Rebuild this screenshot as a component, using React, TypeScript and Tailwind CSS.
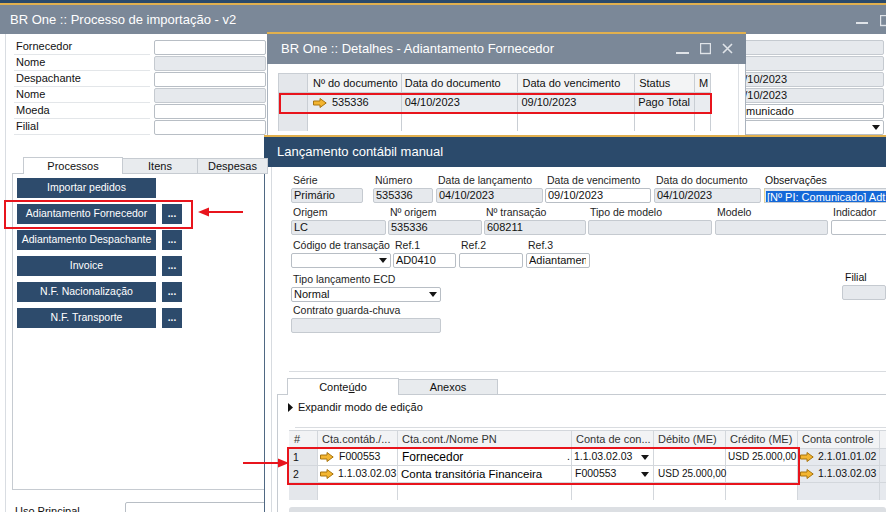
import React from "react";

function Arrow() {
  return (
    <svg width="14" height="10" viewBox="0 0 14 10" className="shrink-0">
      <path d="M0.5 3 H7 V0.5 L13.2 5 L7 9.5 V7 H0.5 Z" fill="#f3b531" stroke="#a8740f" strokeWidth="1" />
    </svg>
  );
}

function Caret() {
  return (
    <svg width="8" height="5" viewBox="0 0 8 5" className="shrink-0">
      <path d="M0 0 H8 L4 5 Z" fill="#151515" />
    </svg>
  );
}

type BoxProps = {
  w: string;
  gray?: boolean;
  caret?: boolean;
  children?: React.ReactNode;
};

function Box({ w, gray, caret, children }: BoxProps) {
  return (
    <div
      className={`${w} h-[15px] border rounded-[2px] flex items-center pl-[2px] pr-[3px] overflow-hidden whitespace-nowrap ${
        gray ? "bg-[#e6e9ed] border-[#c5cad0]" : "bg-white border-[#b8bec5]"
      }`}
    >
      <span className="flex-1 overflow-hidden leading-[13px]">{children}</span>
      {caret && <Caret />}
    </div>
  );
}

type FieldProps = {
  label: string;
  w: string;
  ml?: string;
  gray?: boolean;
  caret?: boolean;
  value?: React.ReactNode;
};

function Field({ label, w, ml = "", gray, caret, value }: FieldProps) {
  return (
    <div className={`${w} ${ml} shrink-0 flex flex-col`}>
      <div className="h-[14px] leading-[14px] pl-[2px] whitespace-nowrap text-[10.5px] text-[#1e1e1e]">{label}</div>
      <div className="mt-[1px]">
        <Box w="w-full" gray={gray} caret={caret}>
          {value}
        </Box>
      </div>
    </div>
  );
}

function WinButtons() {
  return (
    <div className="flex items-center gap-[11px]">
      <svg width="13" height="12" viewBox="0 0 13 12">
        <rect x="0" y="9" width="13" height="2" fill="#dfe3e8" />
      </svg>
      <svg width="11" height="12" viewBox="0 0 11 12">
        <rect x="0.5" y="0.5" width="10" height="10" fill="none" stroke="#dfe3e8" strokeWidth="1.4" />
      </svg>
      <svg width="11" height="12" viewBox="0 0 11 12">
        <path d="M1 1 L10 10 M10 1 L1 10" stroke="#dfe3e8" strokeWidth="1.6" />
      </svg>
    </div>
  );
}

const mainRows = [
  { label: "Fornecedor", gray: false, rGray: true, rText: "", caret: false },
  { label: "Nome", gray: true, rGray: true, rText: "", caret: false },
  { label: "Despachante", gray: false, rGray: true, rText: "04/10/2023", caret: false },
  { label: "Nome", gray: true, rGray: true, rText: "09/10/2023", caret: false },
  { label: "Moeda", gray: false, rGray: false, rText: "Comunicado", caret: false },
  { label: "Filial", gray: false, rGray: false, rText: "", caret: true },
];

const buttons = [
  { text: "Importar pedidos", more: false },
  { text: "Adiantamento Fornecedor", more: true },
  { text: "Adiantamento Despachante", more: true },
  { text: "Invoice", more: true },
  { text: "N.F. Nacionalização", more: true },
  { text: "N.F. Transporte", more: true },
];

const lcCols = ["w-[29px]", "w-[80px]", "w-[174px]", "w-[82px]", "w-[72px]", "w-[72px]", "w-[82px]", "w-[20px]"];
const lcHead = ["#", "Cta.contáb./...", "Cta.cont./Nome PN", "Conta de con...", "Débito (ME)", "Crédito (ME)", "Conta controle", ""];

export default function App() {
  return (
    <div className="relative w-[886px] h-[512px] overflow-hidden bg-white text-[11px] text-[#111] font-['Liberation_Sans',Arial,sans-serif]">
      {/* Main window */}
      <div className="h-[3px] bg-[#2b4a6b]" />
      <div className="h-[2px] bg-[#e1b04e]" />
      <div className="h-[29px] bg-[#7b8898] flex items-center justify-between pl-[10px]">
        <span className="text-[13px] text-white">BR One :: Processo de importação - v2</span>
        <div className="flex items-center gap-[12px] -mr-[6px] mt-[2px]">
          <svg width="12" height="12" viewBox="0 0 12 12">
            <rect x="0" y="7" width="12" height="2" fill="#dfe3e8" />
          </svg>
          <svg width="12" height="12" viewBox="0 0 12 12">
            <rect x="0.5" y="0.5" width="11" height="10" fill="none" stroke="#dfe3e8" strokeWidth="1.4" />
          </svg>
        </div>
      </div>

      <div className="pl-[5px] h-[478px]">
        <div className="h-full border-l border-[#d9dde2] pt-[5px]">
          {mainRows.map((r, i) => (
            <div key={i} className="flex items-center h-[16px]">
              <div className="ml-[8px] w-[136px] h-full border-b border-[#e3e6e9] pl-[2px] leading-[15px]">{r.label}</div>
              <div className="ml-[4px]">
                <Box w="w-[112px]" gray={r.gray} />
              </div>
              <div className="ml-auto mr-[2px]">
                <Box w="w-[155px]" gray={r.rGray} caret={r.caret}>
                  {r.rText}
                </Box>
              </div>
            </div>
          ))}

          {/* tabs */}
          <div className="mt-[22px] ml-[17px] flex relative z-10 -mb-px">
            <div className="w-[100px] h-[17px] bg-white border border-b-0 border-[#c6cbd1] flex items-center justify-center">Processos</div>
            <div className="w-[75px] h-[16px] mt-[1px] bg-[#e8ebee] border border-l-0 border-[#c6cbd1] flex items-center justify-center">Itens</div>
            <div className="w-[70px] h-[16px] mt-[1px] bg-[#e8ebee] border border-l-0 border-[#c6cbd1] flex items-center justify-center">Despesas</div>
          </div>
          <div className="ml-[6px] w-[262px] h-[317px] border border-[#c6cbd1] pt-[4px] pl-[4px] flex flex-col gap-[6px]">
            {buttons.map((b) => (
              <div key={b.text} className="flex gap-[6px]">
                <div className="w-[139px] h-[20px] bg-[#2d4b6c] text-white text-[10.5px] flex items-center justify-center">{b.text}</div>
                {b.more && (
                  <div className="w-[20px] h-[20px] bg-[#2d4b6c] text-white flex items-center justify-center text-[10px] font-bold pb-[2px]">...</div>
                )}
              </div>
            ))}
          </div>
          <div className="mt-[12px] flex items-start">
            <div className="ml-[9px] w-[110px] pt-[1px]">Uso Principal</div>
            <Box w="w-[142px]" />
          </div>
        </div>
      </div>

      {/* Detalhes window */}
      <div className="absolute left-[267px] top-[32px] w-[479px] h-[104px] flex flex-col">
        <div className="h-[2px] shrink-0 bg-[#e1b04e]" />
        <div className="h-[30px] shrink-0 bg-[#7b8898] flex items-center justify-between pl-[14px] pr-[13px]">
          <span className="text-[13px] text-white">BR One :: Detalhes - Adiantamento Fornecedor</span>
          <WinButtons />
        </div>
        <div className="flex-1 bg-white border-x border-[#aab3be] flex">
          <div className="flex-1 pl-[10px] pt-[9px]">
            <div className="w-[433px] border-t border-l border-[#c9ced4]">
              <div className="flex h-[19px] bg-[#f3f4f5]">
                <div className="w-[29px] bg-[#e4e7eb] border-r border-b border-[#c9ced4]" />
                <div className="w-[94px] border-r border-b border-[#c9ced4] pl-[5px] leading-[18px]">Nº do documento</div>
                <div className="w-[117px] border-r border-b border-[#c9ced4] pl-[3px] leading-[18px]">Data do documento</div>
                <div className="w-[117px] border-r border-b border-[#c9ced4] pl-[4px] leading-[18px]">Data do vencimento</div>
                <div className="w-[60px] border-r border-b border-[#c9ced4] pl-[4px] leading-[18px]">Status</div>
                <div className="w-[16px] border-r border-b border-[#c9ced4] pl-[4px] leading-[18px] overflow-hidden">M</div>
              </div>
              <div className="flex h-[20px] bg-[#e9ecf0]">
                <div className="w-[29px] bg-[#e4e7eb] border-r border-b border-[#c9ced4]" />
                <div className="w-[94px] border-r border-b border-[#c9ced4] pl-[5px] flex items-center gap-[5px]">
                  <Arrow />
                  <span>535336</span>
                </div>
                <div className="w-[117px] border-r border-b border-[#c9ced4] pl-[3px] leading-[19px]">04/10/2023</div>
                <div className="w-[117px] border-r border-b border-[#c9ced4] pl-[3px] leading-[19px]">09/10/2023</div>
                <div className="w-[60px] border-r border-b border-[#c9ced4] pl-[3px] leading-[19px]">Pago Total</div>
                <div className="w-[16px] border-r border-b border-[#c9ced4]" />
              </div>
              <div className="flex h-[18px]">
                <div className="w-[29px] bg-[#e4e7eb] border-r border-[#c9ced4]" />
                <div className="w-[94px] border-r border-[#c9ced4]" />
                <div className="w-[117px] border-r border-[#c9ced4]" />
                <div className="w-[117px] border-r border-[#c9ced4]" />
                <div className="w-[60px] border-r border-[#c9ced4]" />
                <div className="w-[16px] border-r border-[#c9ced4]" />
              </div>
            </div>
          </div>
          <div className="w-[7px] border-l border-[#dde0e4]" />
        </div>
      </div>

      {/* Lançamento contábil manual window */}
      <div className="absolute left-[264px] top-[135px] w-[622px] h-[377px] flex flex-col overflow-hidden">
        <div className="h-[2px] shrink-0 bg-[#e1b04e]" />
        <div className="h-[30px] shrink-0 bg-[#2b4a6b] flex items-center pl-[13px]">
          <span className="text-[13px] text-white">Lançamento contábil manual</span>
        </div>
        <div className="flex-1 min-h-0 bg-white border-l border-[#4f6883] flex">
          <div className="w-[7px] shrink-0 border-r border-[#d7dbe0]" />
          <div className="flex-1 min-w-0 flex flex-col">
            <div className="pl-[19px] pt-[6px] flex flex-col">
              {/* row 1 */}
              <div className="flex">
                <Field label="Série" w="w-[72px]" gray value="Primário" />
                <Field label="Número" w="w-[60px]" ml="ml-[10px]" gray value="535336" />
                <Field label="Data de lançamento" w="w-[107px]" ml="ml-[3px]" gray value="04/10/2023" />
                <Field label="Data de vencimento" w="w-[106px]" ml="ml-[2px]" value="09/10/2023" />
                <Field label="Data do documento" w="w-[107px]" ml="ml-[3px]" gray value="04/10/2023" />
                <div className="ml-[3px] w-[130px] shrink-0 flex flex-col">
                  <div className="h-[14px] leading-[14px] pl-[1px] text-[10.5px] whitespace-nowrap">Observações</div>
                  <div className="mt-[1px] h-[15px] border border-[#c5cad0] border-l-[#e8d690] bg-[#e6e9ed] pl-[1px] overflow-hidden whitespace-nowrap">
                    <span className="bg-[#1468d8] text-white leading-[13px] px-[1px] inline-block">[Nº PI: Comunicado] Adt. fornecedor</span>
                  </div>
                </div>
              </div>
              {/* row 2 */}
              <div className="flex mt-[2px]">
                <Field label="Origem" w="w-[95px]" gray value="LC" />
                <Field label=" Nº origem" w="w-[94px]" ml="ml-[2px]" gray value="535336" />
                <Field label="Nº transação" w="w-[102px]" ml="ml-[2px]" gray value="608211" />
                <Field label="Tipo de modelo" w="w-[124px]" ml="ml-[2px]" gray />
                <Field label="Modelo" w="w-[113px]" ml="ml-[3px]" gray />
                <Field label="Indicador" w="w-[70px]" ml="ml-[3px]" />
              </div>
              {/* row 3 */}
              <div className="flex mt-[3px]">
                <Field label="Código de transação" w="w-[100px]" caret />
                <Field label="Ref.1" w="w-[63px]" ml="ml-[2px]" value="AD0410" />
                <Field label="Ref.2" w="w-[64px]" ml="ml-[3px]" />
                <Field label="Ref.3" w="w-[64px]" ml="ml-[3px]" value="Adiantamento" />
              </div>
              {/* row 4 */}
              <div className="flex mt-[4px]">
                <Field label="Tipo lançamento ECD" w="w-[150px]" caret value="Normal" />
                <div className="ml-auto w-[44px] flex flex-col -mt-[2px]">
                  <div className="h-[14px] leading-[14px] pl-[3px] text-[10.5px]">Filial</div>
                  <div className="mt-[1px]">
                    <Box w="w-full" gray />
                  </div>
                </div>
              </div>
              {/* row 5 */}
              <div className="flex mt-[1px]">
                <Field label="Contrato guarda-chuva" w="w-[150px]" gray />
              </div>
            </div>

            <div className="mt-[38px] ml-[17px] border-t border-[#d9dce0]" />

            {/* tabs */}
            <div className="mt-[6px] ml-[15px] flex relative z-10 -mb-px">
              <div className="w-[112px] h-[17px] bg-white border border-b-0 border-[#c6cbd1] flex items-center justify-center">
                Conte<span className="underline">ú</span>do
              </div>
              <div className="w-[99px] h-[16px] mt-[1px] bg-[#e8ebee] border border-l-0 border-[#c6cbd1] flex items-center justify-center">Anexos</div>
            </div>
            <div className="ml-[5px] flex-1 border-t border-l border-[#c6cbd1] flex flex-col">
              <div className="mt-[5px] h-[14px] pl-[10px] flex items-center gap-[5px]">
                <svg width="5" height="9" viewBox="0 0 5 9">
                  <path d="M0 0 L5 4.5 L0 9 Z" fill="#111" />
                </svg>
                <span>Expandir modo de edição</span>
              </div>
              <div className="mt-[13px] ml-[17px] border-t border-[#d9dce0]" />
              <div className="mt-[2px] ml-[11px] flex flex-col">
                <div className="flex h-[19px] bg-[#f2f3f5] border-t border-[#d3d7dc]">
                  {lcHead.map((h, i) => (
                    <div key={i} className={`${lcCols[i]} shrink-0 border-r border-b border-[#d3d7dc] ${i === 0 ? "pl-[5px]" : "pl-[4px]"} leading-[17px] whitespace-nowrap overflow-hidden text-[#333]`}>
                      {h}
                    </div>
                  ))}
                </div>
                {/* row 1 */}
                <div className="flex h-[17px] text-[10.5px]">
                  <div className="w-[29px] shrink-0 bg-[#e4e7eb] border-r border-b border-[#d3d7dc] pl-[4px] leading-[16px]">1</div>
                  <div className="w-[80px] shrink-0 border-r border-b border-[#d3d7dc] pl-[2px] flex items-center gap-[5px]">
                    <Arrow />
                    <span>F000553</span>
                  </div>
                  <div className="w-[174px] shrink-0 border-r border-b border-[#d3d7dc] pl-[4px] pr-[1px] flex items-center justify-between text-black">
                    <span className="text-[12px]">Fornecedor</span>
                    <span>.</span>
                  </div>
                  <div className="w-[82px] shrink-0 border-r border-b border-[#d3d7dc] pl-[2px] pr-[4px] flex items-center justify-between">
                    <span>1.1.03.02.03</span>
                    <Caret />
                  </div>
                  <div className="w-[72px] shrink-0 border-r border-b border-[#d3d7dc]" />
                  <div className="w-[72px] shrink-0 border-r border-b border-[#d3d7dc] pl-[2px] leading-[16px] whitespace-nowrap text-[10px]">USD 25.000,00</div>
                  <div className="w-[82px] shrink-0 bg-[#e6e9ee] border-r border-b border-[#d3d7dc] pl-[2px] flex items-center gap-[4px]">
                    <Arrow />
                    <span>2.1.01.01.02</span>
                  </div>
                  <div className="w-[20px] shrink-0 bg-[#e6e9ee] border-b border-[#d3d7dc]" />
                </div>
                {/* row 2 */}
                <div className="flex h-[17px] text-[10.5px]">
                  <div className="w-[29px] shrink-0 bg-[#e4e7eb] border-r border-b border-[#d3d7dc] pl-[4px] leading-[16px]">2</div>
                  <div className="w-[80px] shrink-0 border-r border-b border-[#d3d7dc] pl-[2px] flex items-center gap-[4px] overflow-hidden whitespace-nowrap">
                    <Arrow />
                    <span>1.1.03.02.03</span>
                  </div>
                  <div className="w-[174px] shrink-0 border-r border-b border-[#d3d7dc] pl-[3px] leading-[16px] text-[11.5px] text-black whitespace-nowrap">Conta transitória Financeira</div>
                  <div className="w-[82px] shrink-0 border-r border-b border-[#d3d7dc] pl-[3px] pr-[4px] flex items-center justify-between">
                    <span>F000553</span>
                    <Caret />
                  </div>
                  <div className="w-[72px] shrink-0 border-r border-b border-[#d3d7dc] pl-[4px] leading-[16px] whitespace-nowrap text-[10px]">USD 25.000,00</div>
                  <div className="w-[72px] shrink-0 border-r border-b border-[#d3d7dc]" />
                  <div className="w-[82px] shrink-0 bg-[#e6e9ee] border-r border-b border-[#d3d7dc] pl-[2px] flex items-center gap-[4px]">
                    <Arrow />
                    <span>1.1.03.02.03</span>
                  </div>
                  <div className="w-[20px] shrink-0 bg-[#e6e9ee] border-b border-[#d3d7dc]" />
                </div>
                {/* row 3 */}
                <div className="flex h-[17px]">
                  <div className="w-[29px] shrink-0 bg-[#e4e7eb] border-r border-[#d3d7dc]" />
                  <div className="w-[80px] shrink-0 border-r border-[#d3d7dc]" />
                  <div className="w-[174px] shrink-0 border-r border-[#d3d7dc]" />
                  <div className="w-[82px] shrink-0 border-r border-[#d3d7dc]" />
                  <div className="w-[72px] shrink-0 border-r border-[#d3d7dc]" />
                  <div className="w-[72px] shrink-0 border-r border-[#d3d7dc]" />
                  <div className="w-[82px] shrink-0 bg-[#e6e9ee] border-r border-[#d3d7dc]" />
                  <div className="w-[20px] shrink-0 bg-[#e6e9ee]" />
                </div>
                <div className="mt-[7px] h-[8px] shrink-0 bg-[#dcdfe3] rounded-[3px]" />
              </div>
            </div>
          </div>
        </div>
      </div>

      {/* annotations */}
      <div className="absolute left-[4px] top-[200px] w-[189px] h-[29px] border-2 border-[#e8141c]" />
      <svg className="absolute left-[198px] top-[207px]" width="46" height="10" viewBox="0 0 46 10">
        <path d="M9 5 H45" stroke="#e8141c" strokeWidth="2.2" />
        <path d="M0 5 L11 0.5 L11 9.5 Z" fill="#e8141c" />
      </svg>
      <div className="absolute left-[279px] top-[93px] w-[433px] h-[21px] border-2 border-[#e8141c]" />
      <div className="absolute left-[287px] top-[447px] w-[513px] h-[38px] border-2 border-[#e8141c]" />
      <svg className="absolute left-[243px] top-[458px]" width="46" height="10" viewBox="0 0 46 10">
        <path d="M0 5 H36" stroke="#e8141c" strokeWidth="2.2" />
        <path d="M46 5 L35 0.5 L35 9.5 Z" fill="#e8141c" />
      </svg>
    </div>
  );
}
